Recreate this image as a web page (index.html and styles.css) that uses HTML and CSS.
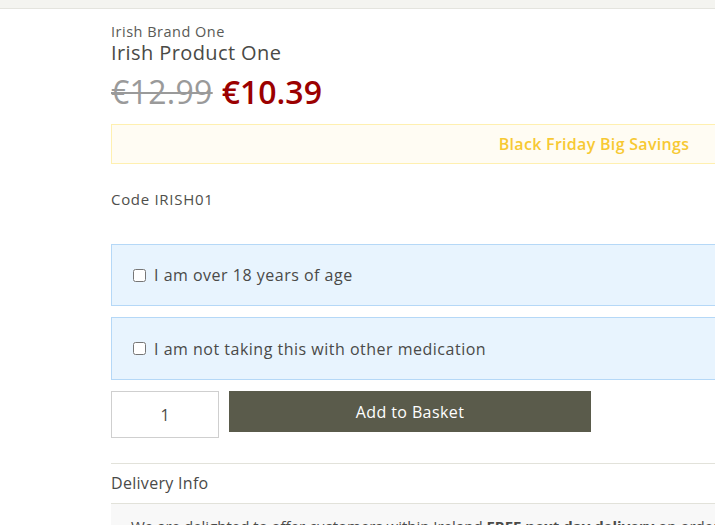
FILE: index.html
```html
<!DOCTYPE html>
<html lang="en">
<head>
<meta charset="utf-8">
<title>Irish Product One</title>
<link rel="stylesheet" href="styles.css">
</head>
<body>
<div class="topbar"></div>
<main class="product">
  <div class="brand">Irish Brand One</div>
  <h1 class="title">Irish Product One</h1>
  <div class="prices">
    <span class="old">€12.99</span>
    <span class="new">€10.39</span>
  </div>
  <div class="promo">Black Friday Big Savings</div>
  <div class="code">Code IRISH01</div>
  <label class="confirm"><input type="checkbox"> <span>I am over 18 years of age</span></label>
  <label class="confirm"><input type="checkbox"> <span>I am not taking this with other medication</span></label>
  <div class="buy">
    <input class="qty" type="text" value="1">
    <button class="add">Add to Basket</button>
  </div>
  <div class="delivery">
    <div class="delivery-head">Delivery Info</div>
    <div class="delivery-body">We are delighted to offer customers within Ireland <b>FREE next day delivery</b> on orders over €50.</div>
  </div>
</main>
</body>
</html>
```
FILE: styles.css
```css
html, body {
  margin: 0;
  padding: 0;
  overflow: hidden;
  background: #fff;
}
body {
  font-family: "Open Sans", "Liberation Sans", sans-serif;
  color: #4a4a48;
  width: 715px;
  height: 525px;
}
.topbar {
  height: 8px;
  background: #f4f4f0;
  border-bottom: 1px solid #e4e4de;
}
.product {
  margin-left: 111px;
  width: 966px;
  padding-top: 13px;
}
.brand {
  font-size: 14.5px;
  line-height: 19px;
  letter-spacing: 0.5px;
  color: #5a5a56;
}
.title {
  margin: 0;
  margin-top: 1px;
  font-weight: 400;
  font-size: 20px;
  line-height: 22px;
  letter-spacing: 0.4px;
  color: #4a4a46;
}
.prices {
  margin-top: 8px;
  font-size: 32px;
  line-height: 40px;
  display: flex;
  gap: 9px;
}
.old {
  color: #9a9a9a;
  letter-spacing: 0.3px;
  text-decoration: line-through;
  text-decoration-thickness: 2px;
}
.new {
  color: #9b0000;
  font-weight: 600;
}
.promo {
  margin-top: 12px;
  height: 38px;
  border: 1px solid #fff0b0;
  background: #fffcf3;
  color: #f7c933;
  font-weight: 600;
  font-size: 16px;
  line-height: 38px;
  letter-spacing: 0.3px;
  text-align: center;
}
.code {
  margin-top: 25px;
  font-size: 15px;
  line-height: 20px;
  letter-spacing: 0.7px;
  color: #4f4f4c;
}
.confirm {
  display: flex;
  align-items: center;
  gap: 8px;
  margin-top: 35px;
  height: 60px;
  padding-left: 21px;
  background: #e8f4fe;
  border: 1px solid #b5d8f7;
  font-size: 16px;
  letter-spacing: 0.5px;
  color: #4a4a48;
}
.confirm + .confirm {
  margin-top: 11px;
  height: 61px;
}
.confirm input {
  margin: 0;
  width: 13px;
  height: 13px;
}
.buy {
  display: flex;
  gap: 10px;
  margin-top: 11px;
  align-items: flex-start;
}
.qty {
  box-sizing: border-box;
  width: 108px;
  height: 47px;
  border: 1px solid #cfcfcf;
  text-align: center;
  font-family: inherit;
  font-size: 16px;
  color: #4a4a48;
  padding: 0;
}
.add {
  width: 362px;
  height: 41px;
  border: 0;
  background: #5a5b4b;
  color: #fff;
  font-family: inherit;
  font-size: 16px;
  font-weight: 500;
  letter-spacing: 0.4px;
}
.delivery {
  margin-top: 25px;
  border-top: 1px solid #e2e2da;
}
.delivery-head {
  height: 39px;
  line-height: 39px;
  font-size: 16px;
  letter-spacing: 0.3px;
  border-bottom: 1px solid #e2e2da;
}
.delivery-body {
  background: #f8f8f8;
  padding: 11px 20px;
  font-size: 15px;
  line-height: 22px;
  white-space: nowrap;
}
```
